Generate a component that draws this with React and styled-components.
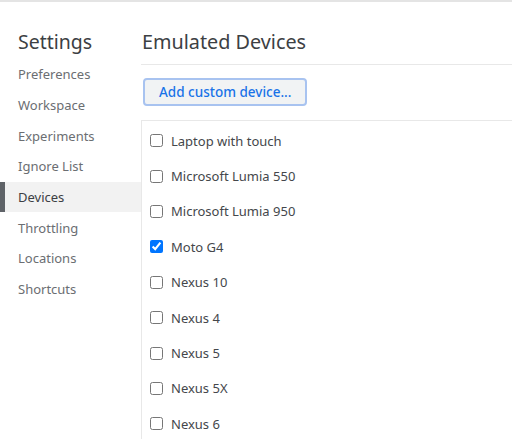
import React from 'react';
import styled, { createGlobalStyle } from 'styled-components';

const GlobalStyle = createGlobalStyle`
  html, body {
    margin: 0;
    padding: 0;
    background: #fff;
  }
  body {
    font-family: "Noto Sans", "Open Sans", Arial, sans-serif;
    color: #202124;
  }
`;

const sections = [
  'Preferences',
  'Workspace',
  'Experiments',
  'Ignore List',
  'Devices',
  'Throttling',
  'Locations',
  'Shortcuts',
];

const devices = [
  { name: 'Laptop with touch', checked: false },
  { name: 'Microsoft Lumia 550', checked: false },
  { name: 'Microsoft Lumia 950', checked: false },
  { name: 'Moto G4', checked: true },
  { name: 'Nexus 10', checked: false },
  { name: 'Nexus 4', checked: false },
  { name: 'Nexus 5', checked: false },
  { name: 'Nexus 5X', checked: false },
  { name: 'Nexus 6', checked: false },
];

const App = () => (
  <>
    <GlobalStyle />
    <Page>
      <Sidebar>
        <SidebarTitle>Settings</SidebarTitle>
        <NavList>
          {sections.map(s => (
            <NavItem key={s} selected={s === 'Devices'}>{s}</NavItem>
          ))}
        </NavList>
      </Sidebar>
      <Main>
        <Header>Emulated Devices</Header>
        <Toolbar>
          <AddButton>Add custom device...</AddButton>
        </Toolbar>
        <DeviceList>
          {devices.map(d => (
            <DeviceRow key={d.name}>
              <Checkbox type="checkbox" defaultChecked={d.checked} />
              <DeviceName>{d.name}</DeviceName>
            </DeviceRow>
          ))}
        </DeviceList>
      </Main>
    </Page>
  </>
);

export default App;

const Page = styled.div`
  display: flex;
  height: 439px;
  overflow: hidden;
  border-top: 2px solid #e4e4e4;
  box-sizing: border-box;
`;

const Sidebar = styled.nav`
  width: 141px;
  flex: none;
  padding-top: 27px;
`;

const SidebarTitle = styled.div`
  font-size: 19.5px;
  line-height: 26px;
  color: #3c4043;
  padding-left: 18px;
  margin-bottom: 4px;
`;

const NavList = styled.div`
  display: flex;
  flex-direction: column;
`;

const NavItem = styled.div`
  height: 30.7px;
  display: flex;
  align-items: center;
  font-size: 13px;
  color: ${props => props.selected ? '#3c4043' : '#6b6e72'};
  background: ${props => props.selected ? '#f2f2f2' : 'transparent'};
  position: relative;
  margin-left: ${props => props.selected ? '5px' : '0'};
  padding-left: ${props => props.selected ? '13px' : '18px'};
  &::before {
    content: '';
    display: ${props => props.selected ? 'block' : 'none'};
    position: absolute;
    left: -5px;
    top: 0;
    bottom: 0;
    width: 5px;
    background: #5f6368;
  }
`;

const Main = styled.main`
  flex: 1;
  min-width: 0;
  display: flex;
  flex-direction: column;
`;

const Header = styled.div`
  font-size: 19.8px;
  line-height: 26px;
  color: #3c4043;
  padding: 27px 0 9px 1px;
  border-bottom: 1px solid #e8e8e8;
`;

const Toolbar = styled.div`
  padding: 13px 0 14px 2px;
  display: flex;
`;

const AddButton = styled.button`
  height: 28px;
  box-sizing: border-box;
  padding: 0 14px;
  border: 2px solid #a8c3f0;
  border-radius: 4px;
  background: #f1f3f4;
  color: #1a73e8;
  font-family: inherit;
  font-size: 13.5px;
  font-weight: 500;
  cursor: pointer;
`;

const DeviceList = styled.div`
  flex: 1;
  border-top: 1px solid #e8e8e8;
  border-left: 1px solid #e8e8e8;
  padding: 2px 0 0 8px;
`;

const DeviceRow = styled.label`
  height: 35.4px;
  display: flex;
  align-items: center;
  gap: 8px;
  font-size: 13px;
  color: #44474b;
`;

const Checkbox = styled.input`
  width: 13px;
  height: 13px;
  margin: 0;
`;

const DeviceName = styled.span``;
